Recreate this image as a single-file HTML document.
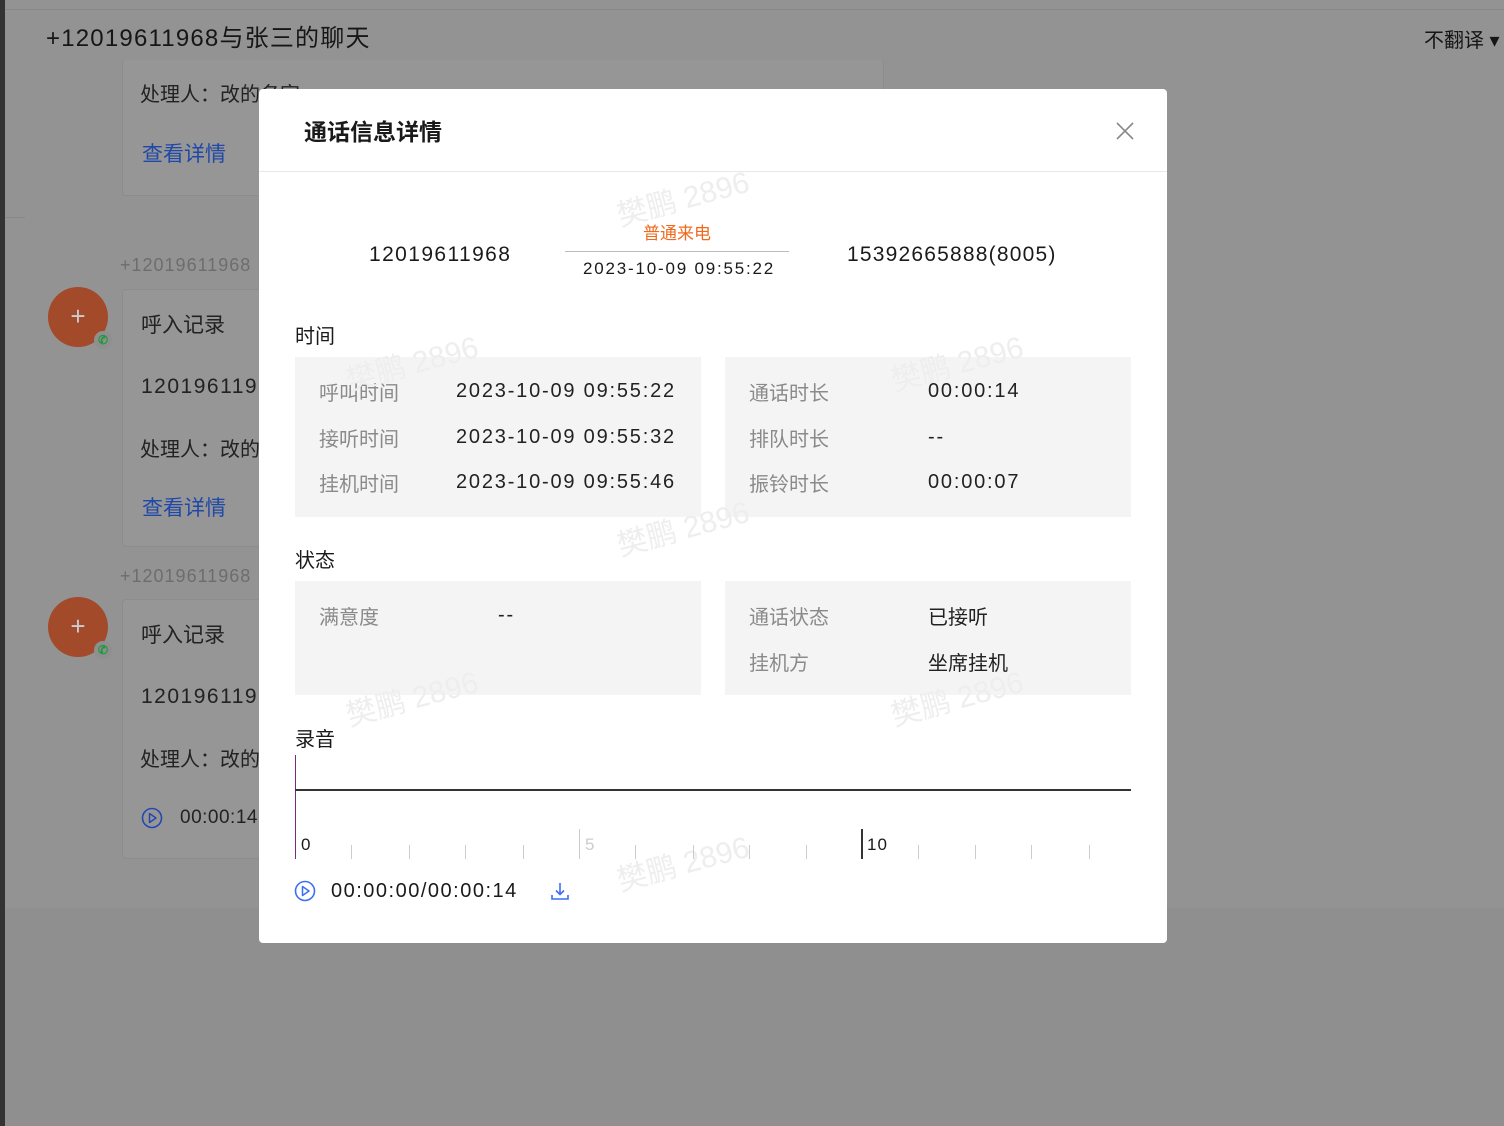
<!DOCTYPE html>
<html><head><meta charset="utf-8"><style>
*{margin:0;padding:0;box-sizing:border-box}
body{width:1504px;height:1126px;overflow:hidden;background:#939393;font-family:"Liberation Sans","Noto Sans CJK SC",sans-serif;position:relative;color:#1a1a1a}
.abs{position:absolute;white-space:nowrap}
.card{position:absolute;background:#969696;border:1px solid #8c8c8c;border-radius:4px}
.av{position:absolute;width:60px;height:60px;border-radius:50%;background:#a24a2a;color:#ccc;font-size:26px;text-align:center;line-height:58px}
.av i{position:absolute;right:-4px;bottom:-2px;width:18px;height:18px;border-radius:50%;background:#8f8f8f;color:#1a9a3a;font-size:12px;line-height:18px;font-style:normal;font-weight:bold}
.modal{position:absolute;left:259px;top:89px;width:908px;height:854px;background:#fff;border-radius:4px}
.lbl{color:#8a8a8a;font-size:20px}
.val{color:#222;font-size:20px;letter-spacing:1.8px}
.box{position:absolute;background:#f4f4f4}
.wm{position:absolute;color:#eee;font-size:30px;transform:rotate(-15deg);white-space:nowrap}
.tick{position:absolute;width:1px;height:14px;background:#ccc;top:756px}
</style></head><body>
<div class="abs" style="left:0;top:0;width:5px;height:1126px;background:#333"></div>
<div class="abs" style="left:5px;top:9px;width:1499px;height:1px;background:#888"></div>
<div class="abs" style="left:5px;top:908px;width:1499px;height:218px;background:#8f8f8f"></div>
<div class="abs" style="left:46px;top:18px;font-size:24px;color:#161616;letter-spacing:1.2px">+12019611968与张三的聊天</div>
<div class="abs" style="left:1424px;top:24px;font-size:20px;color:#161616">不翻译 ▾</div>
<div class="card" style="left:122px;top:60px;width:762px;height:136px;border-top:none"></div>
<div class="abs" style="left:140px;top:78px;font-size:20px;color:#222">处理人：改的名字</div>
<div class="abs" style="left:142px;top:138px;font-size:21px;color:#1f48a8">查看详情</div>
<div class="abs" style="left:5px;top:217px;width:20px;height:1px;background:#888"></div>
<div class="abs" style="left:120px;top:255px;font-size:18px;color:#6d6d6d;letter-spacing:1px">+12019611968</div>
<div class="av" style="left:48px;top:287px">+<i>✆</i></div>
<div class="card" style="left:122px;top:289px;width:200px;height:258px"></div>
<div class="abs" style="left:141px;top:309px;font-size:21px;color:#222">呼入记录</div>
<div class="abs" style="left:141px;top:375px;font-size:21px;color:#222;letter-spacing:1.5px">120196119</div>
<div class="abs" style="left:140px;top:433px;font-size:20px;color:#222">处理人：改的</div>
<div class="abs" style="left:142px;top:492px;font-size:21px;color:#1f48a8">查看详情</div>
<div class="abs" style="left:120px;top:566px;font-size:18px;color:#6d6d6d;letter-spacing:1px">+12019611968</div>
<div class="av" style="left:48px;top:597px">+<i>✆</i></div>
<div class="card" style="left:122px;top:599px;width:200px;height:260px"></div>
<div class="abs" style="left:141px;top:619px;font-size:21px;color:#222">呼入记录</div>
<div class="abs" style="left:141px;top:685px;font-size:21px;color:#222;letter-spacing:1.5px">120196119</div>
<div class="abs" style="left:140px;top:743px;font-size:20px;color:#222">处理人：改的</div>
<svg class="abs" style="left:141px;top:807px" width="22" height="22"><circle cx="11" cy="11" r="9.5" fill="none" stroke="#2448b0" stroke-width="1.6"/><path d="M8.5 6.5L15 11L8.5 15.5Z" fill="none" stroke="#2448b0" stroke-width="1.5" stroke-linejoin="round"/></svg>
<div class="abs" style="left:180px;top:807px;font-size:19px;color:#222;letter-spacing:0.5px">00:00:14</div>

<div class="modal">
<div class="abs" style="left:45px;top:24px;font-size:23px;color:#1a1a1a;font-weight:bold">通话信息详情</div>
<svg class="abs" style="left:857px;top:33px" width="18" height="18"><path d="M1 1L17 17M17 1L1 17" stroke="#888" stroke-width="1.6"/></svg>
<div class="abs" style="left:0;top:82px;width:908px;height:1px;background:#e8e8e8"></div>
<div class="wm" style="left:356px;top:85px">樊鹏 2896</div>
<div class="abs" style="left:110px;top:154px;font-size:21px;letter-spacing:1.4px">12019611968</div>
<div class="abs" style="left:384px;top:130px;font-size:17px;color:#f06a1e">普通来电</div>
<div class="abs" style="left:306px;top:162px;width:224px;height:1px;background:#bbb"></div>
<div class="abs" style="left:324px;top:170px;font-size:17px;letter-spacing:1.8px">2023-10-09 09:55:22</div>
<div class="abs" style="left:588px;top:154px;font-size:21px;letter-spacing:1.2px">15392665888(8005)</div>
<div class="abs" style="left:36px;top:231px;font-size:20px">时间</div>
<div class="box" style="left:36px;top:268px;width:406px;height:160px"></div>
<div class="box" style="left:466px;top:268px;width:406px;height:160px"></div>
<div class="abs lbl" style="left:60px;top:288px">呼叫时间</div><div class="abs val" style="left:197px;top:291px">2023-10-09 09:55:22</div>
<div class="abs lbl" style="left:60px;top:334px">接听时间</div><div class="abs val" style="left:197px;top:337px">2023-10-09 09:55:32</div>
<div class="abs lbl" style="left:60px;top:379px">挂机时间</div><div class="abs val" style="left:197px;top:382px">2023-10-09 09:55:46</div>
<div class="abs lbl" style="left:490px;top:288px">通话时长</div><div class="abs val" style="left:669px;top:291px">00:00:14</div>
<div class="abs lbl" style="left:490px;top:334px">排队时长</div><div class="abs val" style="left:669px;top:337px">--</div>
<div class="abs lbl" style="left:490px;top:379px">振铃时长</div><div class="abs val" style="left:669px;top:382px">00:00:07</div>
<div class="abs" style="left:36px;top:455px;font-size:20px">状态</div>
<div class="box" style="left:36px;top:492px;width:406px;height:114px"></div>
<div class="box" style="left:466px;top:492px;width:406px;height:114px"></div>
<div class="abs lbl" style="left:60px;top:512px">满意度</div><div class="abs val" style="left:239px;top:515px">--</div>
<div class="abs lbl" style="left:490px;top:512px">通话状态</div><div class="abs" style="left:669px;top:512px;font-size:20px;color:#222">已接听</div>
<div class="abs lbl" style="left:490px;top:558px">挂机方</div><div class="abs" style="left:669px;top:558px;font-size:20px;color:#222">坐席挂机</div>
<div class="wm" style="left:85px;top:250px">樊鹏 2896</div>
<div class="wm" style="left:630px;top:250px">樊鹏 2896</div>
<div class="wm" style="left:356px;top:415px">樊鹏 2896</div>
<div class="wm" style="left:85px;top:585px">樊鹏 2896</div>
<div class="wm" style="left:630px;top:585px">樊鹏 2896</div>
<div class="wm" style="left:356px;top:750px">樊鹏 2896</div>
<div class="abs" style="left:36px;top:634px;font-size:20px">录音</div>
<div class="abs" style="left:36px;top:666px;width:1px;height:104px;background:#7a2a7a"></div>
<div class="abs" style="left:36px;top:700px;width:836px;height:2px;background:#333"></div>
<div class="abs" style="left:42px;top:746px;font-size:17px">0</div>
<div class="tick" style="left:92px"></div><div class="tick" style="left:150px"></div><div class="tick" style="left:206px"></div><div class="tick" style="left:264px"></div>
<div class="tick" style="left:320px;top:740px;height:30px"></div>
<div class="abs" style="left:326px;top:746px;font-size:17px;color:#ccc">5</div>
<div class="tick" style="left:376px"></div><div class="tick" style="left:434px"></div><div class="tick" style="left:490px"></div><div class="tick" style="left:547px"></div>
<div class="abs" style="left:602px;top:740px;width:2px;height:30px;background:#333"></div>
<div class="abs" style="left:608px;top:746px;font-size:17px;letter-spacing:1px">10</div>
<div class="tick" style="left:659px"></div><div class="tick" style="left:716px"></div><div class="tick" style="left:772px"></div><div class="tick" style="left:830px"></div>
<svg class="abs" style="left:35px;top:791px" width="22" height="22"><circle cx="11" cy="11" r="9.5" fill="none" stroke="#3b6ff5" stroke-width="1.6"/><path d="M8.5 6.5L15 11L8.5 15.5Z" fill="none" stroke="#3b6ff5" stroke-width="1.5" stroke-linejoin="round"/></svg>
<div class="abs" style="left:72px;top:791px;font-size:20px;letter-spacing:1.5px">00:00:00/00:00:14</div>
<svg class="abs" style="left:290px;top:791px" width="22" height="22"><path d="M11 3V14M7 10.5L11 14.5L15 10.5M3 15V19H19V15" fill="none" stroke="#3b6ff5" stroke-width="1.6"/></svg>
</div>
</body></html>
